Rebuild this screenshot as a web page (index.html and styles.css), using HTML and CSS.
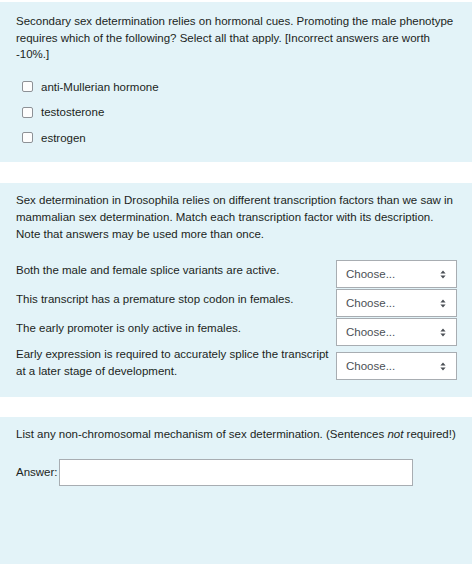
FILE: index.html
```html
<!DOCTYPE html>
<html>
<head>
<meta charset="utf-8">
<link rel="stylesheet" href="styles.css">
</head>
<body>
<div class="page">
  <section class="panel p1">
    <p class="qtext">Secondary sex determination relies on hormonal cues. Promoting the male phenotype requires which of the following? Select all that apply. [Incorrect answers are worth -10%.]</p>
    <div class="options">
      <label class="opt"><span class="cb"></span><span>anti-Mullerian hormone</span></label>
      <label class="opt"><span class="cb"></span><span>testosterone</span></label>
      <label class="opt"><span class="cb"></span><span>estrogen</span></label>
    </div>
  </section>

  <section class="panel p2">
    <p class="qtext">Sex determination in Drosophila relies on different transcription factors than we saw in mammalian sex determination. Match each transcription factor with its description. Note that answers may be used more than once.</p>
    <div class="match">
      <div class="mtext">Both the male and female splice variants are active.</div>
      <div class="sel"><span>Choose...</span><svg class="arr" width="6" height="9" viewBox="0 0 6 9"><path d="M3 0.5 L5.6 3.6 H0.4 Z M3 8.5 L5.6 5.4 H0.4 Z" fill="#4a4f55"/></svg></div>
      <div class="mtext">This transcript has a premature stop codon in females.</div>
      <div class="sel"><span>Choose...</span><svg class="arr" width="6" height="9" viewBox="0 0 6 9"><path d="M3 0.5 L5.6 3.6 H0.4 Z M3 8.5 L5.6 5.4 H0.4 Z" fill="#4a4f55"/></svg></div>
      <div class="mtext">The early promoter is only active in females.</div>
      <div class="sel"><span>Choose...</span><svg class="arr" width="6" height="9" viewBox="0 0 6 9"><path d="M3 0.5 L5.6 3.6 H0.4 Z M3 8.5 L5.6 5.4 H0.4 Z" fill="#4a4f55"/></svg></div>
      <div class="mtext two">Early expression is required to accurately splice the transcript at a later stage of development.</div>
      <div class="sel"><span>Choose...</span><svg class="arr" width="6" height="9" viewBox="0 0 6 9"><path d="M3 0.5 L5.6 3.6 H0.4 Z M3 8.5 L5.6 5.4 H0.4 Z" fill="#4a4f55"/></svg></div>
    </div>
  </section>

  <section class="panel p3">
    <p class="qtext">List any non-chromosomal mechanism of sex determination. (Sentences <em>not</em> required!)</p>
    <div class="answer">
      <span class="alabel">Answer:</span>
      <div class="input"></div>
    </div>
  </section>
</div>
</body>
</html>
```

FILE: styles.css
```css
html, body {
  margin: 0;
  padding: 0;
  background: #ffffff;
}
body {
  font-family: "Liberation Sans", Arial, sans-serif;
  font-size: 11.5px;
  color: #1b1f22;
}
.page {
  display: flex;
  flex-direction: column;
  padding-top: 2px;
  width: 472px;
}
.panel {
  background: #e3f3f8;
  padding: 9px 16px 0 16px;
}
.qtext {
  margin: 0;
  line-height: 16.5px;
}
.p1 {
  height: 149px;
  padding-top: 11px;
}
.options {
  display: flex;
  flex-direction: column;
  gap: 9px;
  margin-top: 16px;
  padding-left: 6px;
}
.opt {
  display: flex;
  align-items: center;
  gap: 8px;
  line-height: 16.5px;
}
.cb {
  width: 9px;
  height: 9px;
  border: 1px solid #8d9196;
  border-radius: 2px;
  background: #fdfdfd;
}
.p2 {
  margin-top: 21px;
  height: 205px;
}
.p2 .qtext {
  line-height: 17px;
}
.match {
  display: grid;
  grid-template-columns: 320px 121px;
  row-gap: 1px;
  margin-top: 17px;
}
.mtext {
  line-height: 17px;
  padding-top: 2px;
  align-self: start;
}
.mtext.two {
  padding-top: 0;
  margin-top: -1px;
}
.sel {
  box-sizing: border-box;
  height: 28px;
  border: 1px solid #a8adb2;
  background: #ffffff;
  display: flex;
  align-items: center;
  justify-content: space-between;
  padding: 0 10px 0 9px;
  color: #4b5056;
  align-self: center;
}
.sel .arr {
  display: block;
}
.match .sel:last-child {
  margin-top: 5px;
}
.p3 {
  margin-top: 20px;
  height: 140px;
}
.answer {
  display: flex;
  align-items: center;
  gap: 1px;
  margin-top: 16px;
}
.input {
  width: 354px;
  height: 27px;
  box-sizing: border-box;
  border: 1px solid #a8adb2;
  background: #ffffff;
}
```
